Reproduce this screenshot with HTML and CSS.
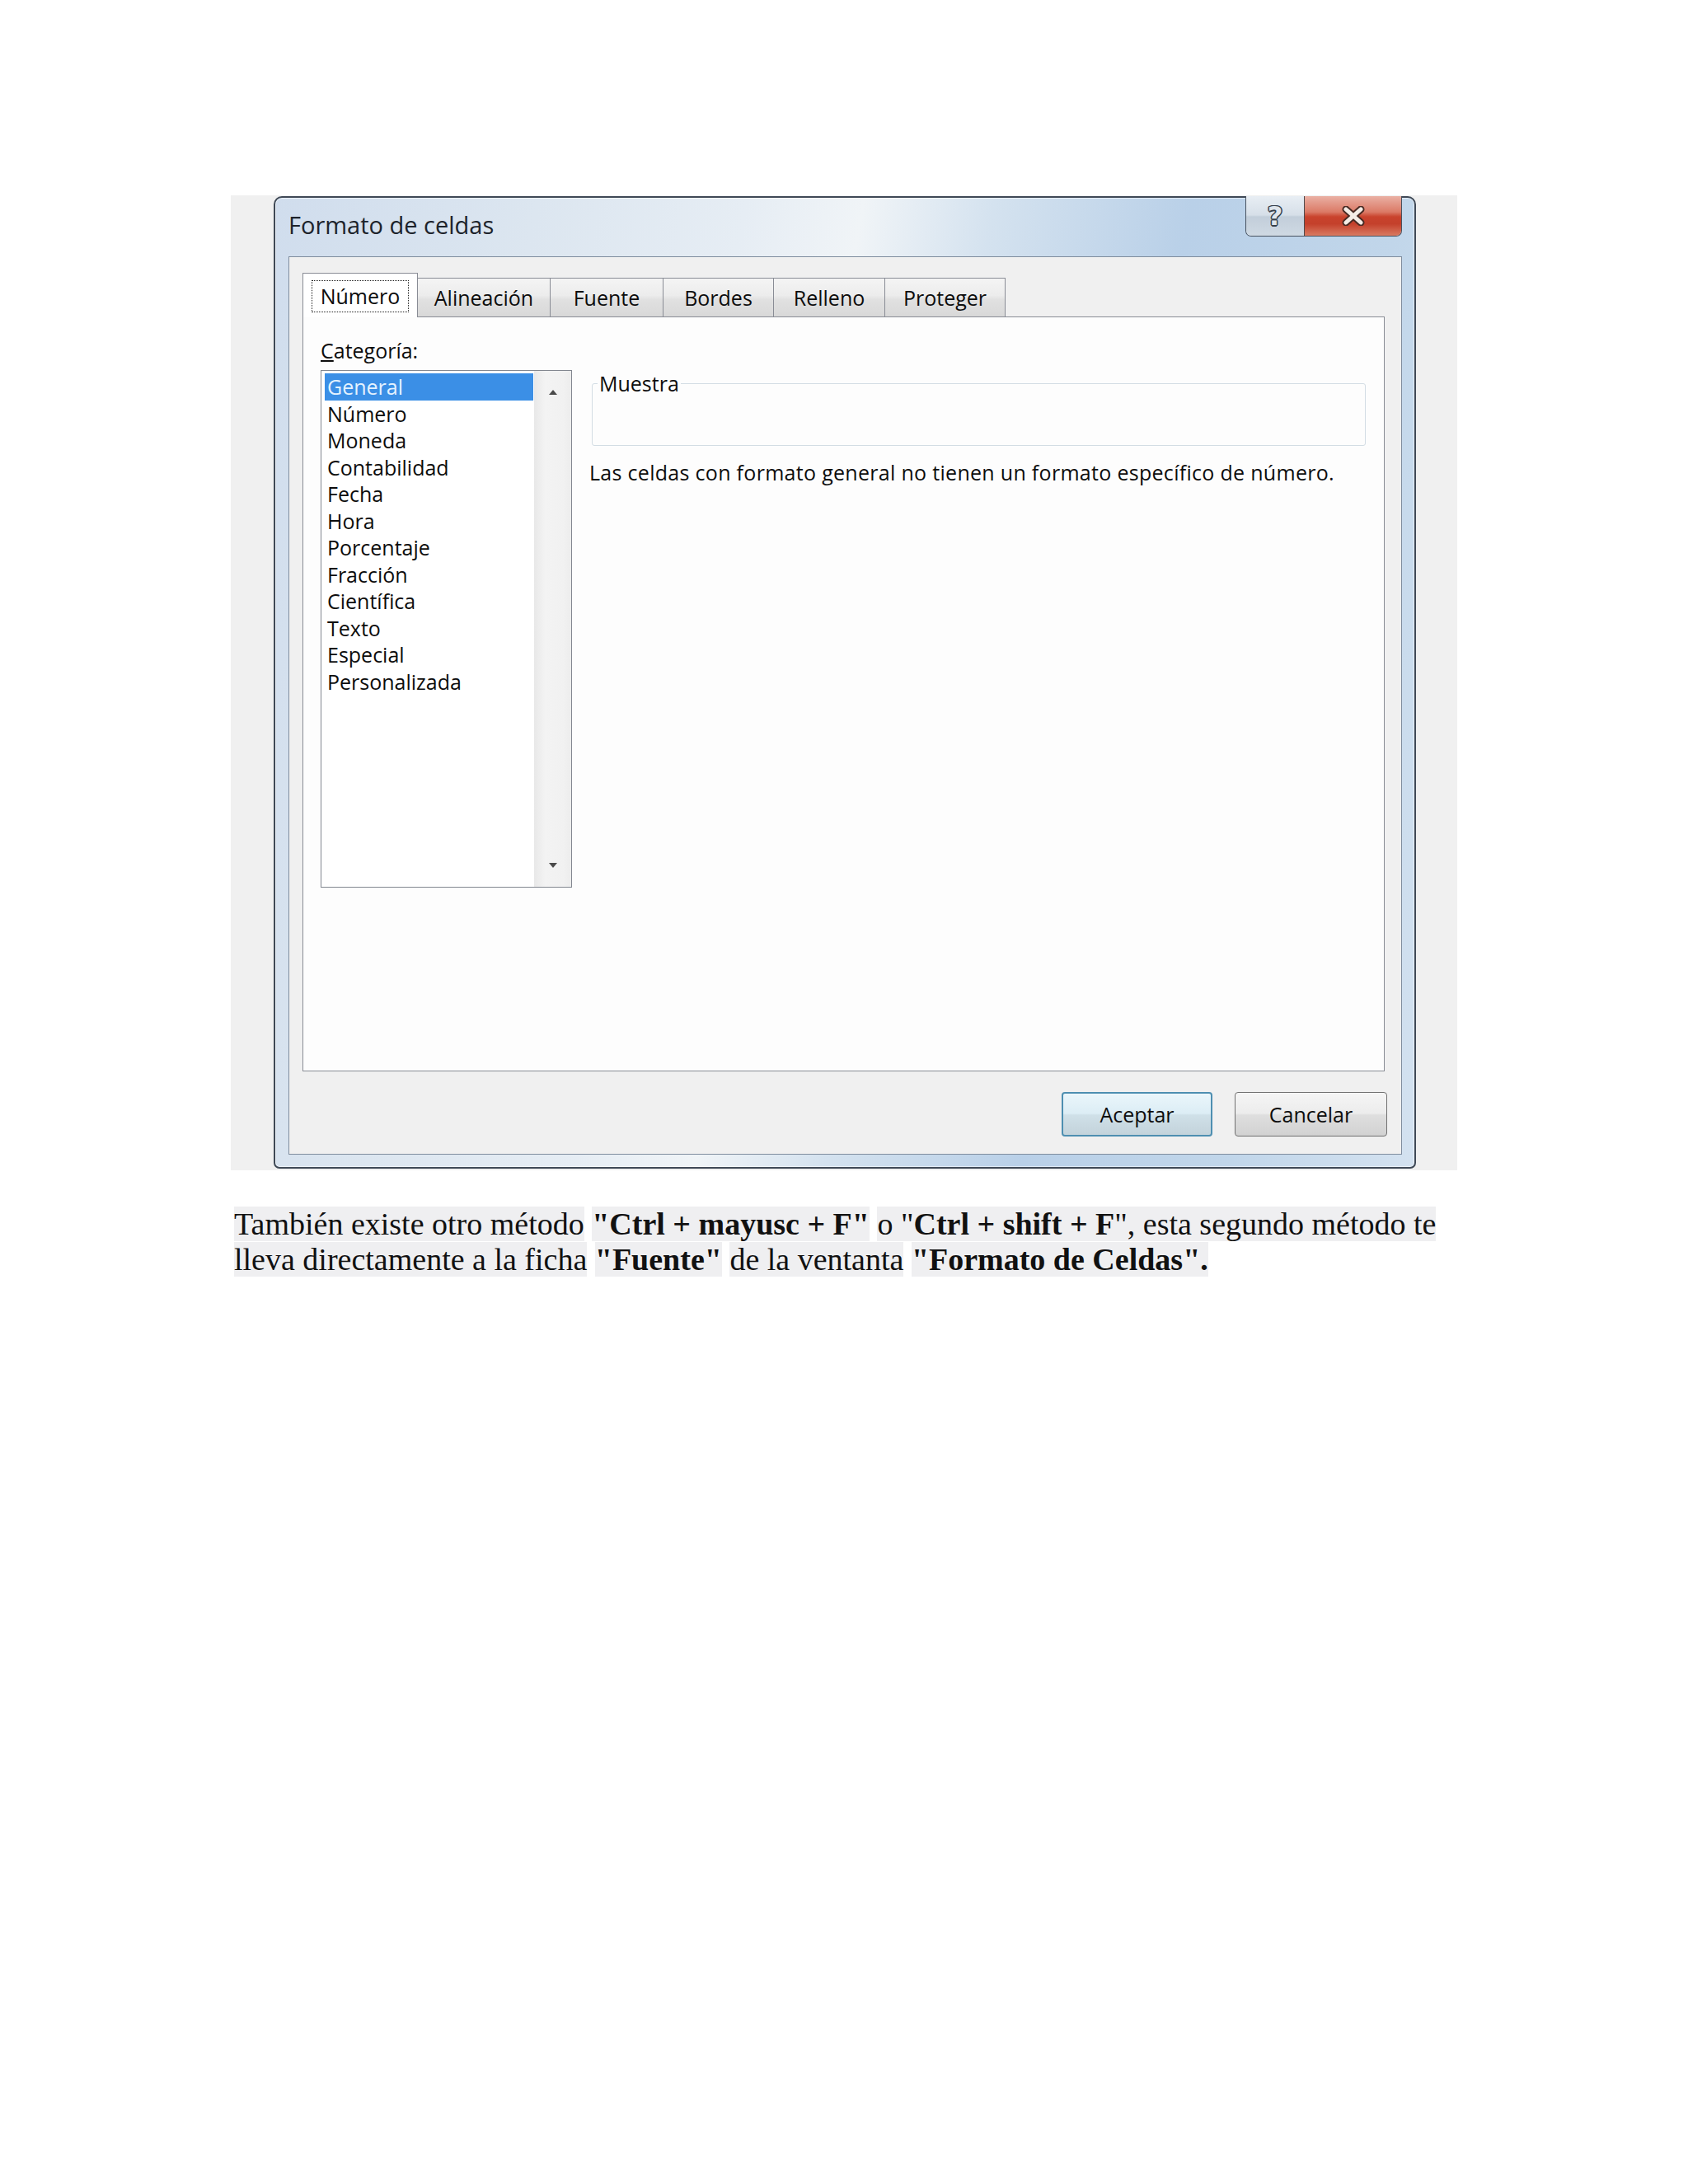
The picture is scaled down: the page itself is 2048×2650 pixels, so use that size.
FILE: index.html
```html
<!DOCTYPE html>
<html lang="es">
<head>
<meta charset="utf-8">
<title>Formato de celdas</title>
<link rel="stylesheet" href="styles.css">
</head>
<body>
<div class="page">
  <div class="shot">
    <div class="window">
      <div class="titlebar">
        <div class="title">Formato de celdas</div>
        <div class="caption">
          <div class="cap help"><span class="q">?</span></div>
          <div class="cap close">
            <svg width="30" height="24" viewBox="0 0 30 24">
              <path d="M6 4 L24 20 M24 4 L6 20" stroke="#4a2b24" stroke-width="9" stroke-linecap="round" fill="none"/>
              <path d="M6 4 L24 20 M24 4 L6 20" stroke="#f4ece6" stroke-width="5" stroke-linecap="round" fill="none"/>
            </svg>
          </div>
        </div>
      </div>
      <div class="client">
        <div class="tabs">
          <div class="tab sel"><span class="focus">Número</span></div>
          <div class="tab">Alineación</div>
          <div class="tab">Fuente</div>
          <div class="tab">Bordes</div>
          <div class="tab">Relleno</div>
          <div class="tab">Proteger</div>
        </div>
        <div class="panel">
          <div class="label"><u>C</u>ategoría:</div>
          <div class="cols">
            <div class="listbox">
              <ul class="items">
                <li class="sel">General</li>
                <li>Número</li>
                <li>Moneda</li>
                <li>Contabilidad</li>
                <li>Fecha</li>
                <li>Hora</li>
                <li>Porcentaje</li>
                <li>Fracción</li>
                <li>Científica</li>
                <li>Texto</li>
                <li>Especial</li>
                <li>Personalizada</li>
              </ul>
              <div class="scroll">
                <div class="arrow"><svg width="12" height="8" viewBox="0 0 12 8"><path d="M1 7 L6 1 L11 7 Z" fill="#4a4a4a"/></svg></div>
                <div class="arrow"><svg width="12" height="8" viewBox="0 0 12 8"><path d="M1 1 L11 1 L6 7 Z" fill="#4a4a4a"/></svg></div>
              </div>
            </div>
            <div class="right">
              <fieldset class="sample">
                <legend>Muestra</legend>
                <div class="sample-body"></div>
              </fieldset>
              <p class="desc">Las celdas con formato general no tienen un formato específico de número.</p>
            </div>
          </div>
        </div>
        <div class="buttons">
          <div class="btn default">Aceptar</div>
          <div class="btn cancel">Cancelar</div>
        </div>
      </div>
    </div>
  </div>
  <p class="note"><span class="hl">También existe otro método</span> <span class="hl"><b>"Ctrl + mayusc + F"</b></span> <span class="hl">o "<b>Ctrl + shift + F</b>", esta segundo método te</span> <span class="hl">lleva directamente a la ficha</span> <span class="hl"><b>"Fuente"</b></span> <span class="hl">de la ventanta</span> <span class="hl"><b>"Formato de Celdas".</b></span></p>
</div>
</body>
</html>
```

FILE: styles.css
```css
html, body {
  margin: 0;
  background: #ffffff;
}

.page {
  box-sizing: border-box;
  min-height: 2650px;
  padding: 237px 0 0 280px;
}

.shot {
  box-sizing: border-box;
  width: 1488px;
  height: 1183px;
  background: #f0f0f0;
  padding: 1px 0 0 52px;
}

.window {
  box-sizing: border-box;
  width: 1386px;
  height: 1180px;
  border: 2px solid #3f4956;
  border-radius: 10px 10px 7px 7px;
  padding: 0 15px 15px 16px;
  display: flex;
  flex-direction: column;
  background: linear-gradient(100deg, #d0dded 0%, #dce6f0 20%, #e6edf4 36%, #f0f4f7 45%, #d4e2ef 55%, #b9d0e8 70%, #c1d6ea 86%, #d4e2f0 100%);
  box-shadow: inset 0 0 0 1px rgba(255, 255, 255, 0.55);
}

.titlebar {
  flex: none;
  height: 71px;
  display: flex;
  justify-content: space-between;
  align-items: flex-start;
}

.title {
  font-family: "Open Sans", "Noto Sans", sans-serif;
  font-size: 29px;
  line-height: 40px;
  margin-top: 13px;
  color: #1d232b;
}

.caption {
  display: flex;
  margin-top: -2px;
  height: 49px;
  border: 1px solid #48525f;
  border-top: none;
  border-radius: 0 0 7px 7px;
  overflow: hidden;
  box-sizing: border-box;
}

.cap {
  display: flex;
  align-items: center;
  justify-content: center;
}

.help {
  width: 71px;
  border-right: 1px solid #4f4a4c;
  box-sizing: border-box;
  background: linear-gradient(#e8eef4, #d6dfe8 48%, #c2ceda 52%, #cfd9e3);
}

.q {
  font-family: "DejaVu Sans", sans-serif;
  font-weight: bold;
  font-size: 32px;
  line-height: 32px;
  color: #dfe5ec;
  text-shadow: 1.5px 0 0 #353f4b, -1.5px 0 0 #353f4b, 0 1.5px 0 #353f4b, 0 -1.5px 0 #353f4b, 1px 1px 0 #353f4b, -1px -1px 0 #353f4b, 1px -1px 0 #353f4b, -1px 1px 0 #353f4b;
}

.close {
  width: 117px;
  background: linear-gradient(#eab0a4, #db7a66 40%, #c9432d 52%, #c4402b 70%, #d97b62);
}

.client {
  flex: none;
  box-sizing: border-box;
  height: 1090px;
  border: 1px solid #7f8d9e;
  background: #f0f0f0;
  padding: 19px 20px 20px 16px;
  display: flex;
  flex-direction: column;
  font-family: "Open Sans", "Noto Sans", sans-serif;
  font-size: 25px;
  color: #0d0d0d;
}

.tabs {
  flex: none;
  height: 53px;
  display: flex;
  align-items: flex-end;
}

.tab {
  box-sizing: border-box;
  height: 47px;
  margin-left: -1px;
  border: 1px solid #898c95;
  border-bottom: none;
  padding-top: 8px;
  line-height: 30px;
  text-align: center;
  background: linear-gradient(#f4f4f4, #ececec 45%, #e1e1e1 55%, #d8d8d8);
}

.tab:nth-child(1) { width: 140px; margin-left: 0; }
.tab:nth-child(2) { width: 162px; }
.tab:nth-child(3) { width: 138px; }
.tab:nth-child(4) { width: 135px; }
.tab:nth-child(5) { width: 136px; }
.tab:nth-child(6) { width: 147px; }

.tab.sel {
  height: 54px;
  margin-bottom: -1px;
  padding-top: 8px;
  background: #ffffff;
  position: relative;
  z-index: 1;
}

.focus {
  display: inline-block;
  border: 1px dotted #222;
  line-height: 37px;
  padding: 0 10px;
}

.panel {
  flex: none;
  box-sizing: border-box;
  height: 916px;
  border: 1px solid #898c95;
  background: #fdfdfd;
  padding: 25px 22px 0 21px;
}

.label {
  line-height: 30px;
  margin: 0 0 9px;
}

.cols {
  display: grid;
  grid-template-columns: 305px 1fr;
  column-gap: 21px;
  align-items: start;
}

.listbox {
  box-sizing: border-box;
  height: 628px;
  border: 1px solid #828790;
  background: #ffffff;
  display: flex;
}

.items {
  flex: 1;
  list-style: none;
  margin: 0;
  padding: 3px 1px 0 4px;
}

.items li {
  line-height: 32.5px;
  padding-left: 3px;
  white-space: nowrap;
}

.items li.sel {
  background: #3b8fe6;
  color: #e4f2ff;
}

.scroll {
  width: 45px;
  display: flex;
  flex-direction: column;
  justify-content: space-between;
  background: linear-gradient(to right, #e8e8e8, #f3f3f3 30%, #f1f1f1 80%, #ececec);
}

.arrow {
  height: 52px;
  display: flex;
  align-items: center;
  justify-content: center;
}

.sample {
  margin: 3px 0 0 3px;
  padding: 0;
  border: 1px solid #d3dde4;
  border-radius: 3px;
  min-width: 0;
}

.sample legend {
  margin-left: 6px;
  padding: 0 2px;
  line-height: 26px;
}

.sample-body {
  height: 62px;
}

.desc {
  margin: 17px 0 0;
  line-height: 30px;
  letter-spacing: 0.3px;
  white-space: nowrap;
}

.buttons {
  flex: none;
  display: flex;
  justify-content: flex-end;
  gap: 27px;
  margin: 25px -3px 0 0;
}

.btn {
  box-sizing: border-box;
  height: 54px;
  border: 1px solid #707070;
  border-radius: 4px;
  line-height: 52px;
  text-align: center;
  background: linear-gradient(#f5f5f5, #ececec 48%, #dedede 52%, #d2d2d2);
}

.btn.default {
  width: 183px;
  border: 2px solid #4e8fb1;
  line-height: 50px;
  background: linear-gradient(#eaf6fb, #dcedf5 48%, #cfe0e8 52%, #c3d3db);
}

.btn.cancel {
  width: 185px;
}

.note {
  width: 1484px;
  margin: 44px 0 0 4px;
  font-family: "Liberation Serif", "Times New Roman", serif;
  font-size: 38px;
  line-height: 43px;
  color: #111;
}

.hl {
  background: #efeff1;
}
```
